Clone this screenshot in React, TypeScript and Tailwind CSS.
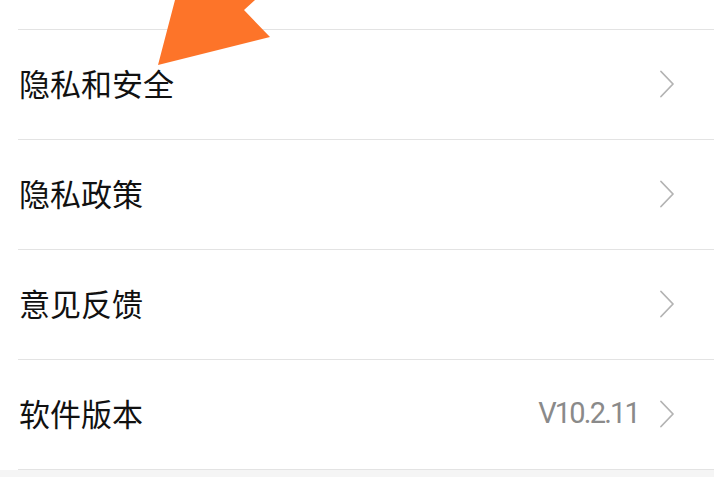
import React from 'react';

const ROWS: { label: string; value?: string }[] = [
  { label: '隐私和安全' },
  { label: '隐私政策' },
  { label: '意见反馈' },
  { label: '软件版本', value: 'V10.2.11' },
];

export default function App() {
  return (
    <div className="relative w-[714px] h-[477px] overflow-hidden bg-white font-['Noto_Sans_CJK_SC','Noto_Sans',sans-serif]">
      {/* tail of the previous row */}
      <div className="h-[29px]" />
      <div className="ml-[18px] h-px bg-[#e3e3e3]" />

      {ROWS.map((row) => (
        <div key={row.label}>
          <div className="h-[109px] flex items-center pl-[19px] pr-[39px] pb-[4px]">
            <span className="text-[31px] leading-none text-[#111111]">{row.label}</span>
            <div className="ml-auto flex items-center gap-[20px] pt-[2px]">
              {row.value && (
                <span className="text-[29px] leading-none tracking-[-1.8px] text-[#8a8a8a] font-['Roboto',sans-serif]">{row.value}</span>
              )}
              <Chevron />
            </div>
          </div>
          <div className="ml-[18px] h-px bg-[#e3e3e3]" />
        </div>
      ))}

      <div className="h-[20px] bg-[#f5f5f5]" />

      {/* orange pointer arrow overlay */}
      <svg className="absolute left-0 top-0" width="714" height="80" viewBox="0 0 714 80">
        <polygon points="175,0 255,0 244,10 270,37 158,65" fill="#fd7429" />
      </svg>
    </div>
  );
}

function Chevron() {
  return (
    <svg width="16" height="28" viewBox="0 0 16 28" fill="none">
      <path d="M2 1.5 L14 14 L2 26.5" stroke="#b3b3b3" strokeWidth="1.8" strokeLinecap="round" strokeLinejoin="round" />
    </svg>
  );
}
